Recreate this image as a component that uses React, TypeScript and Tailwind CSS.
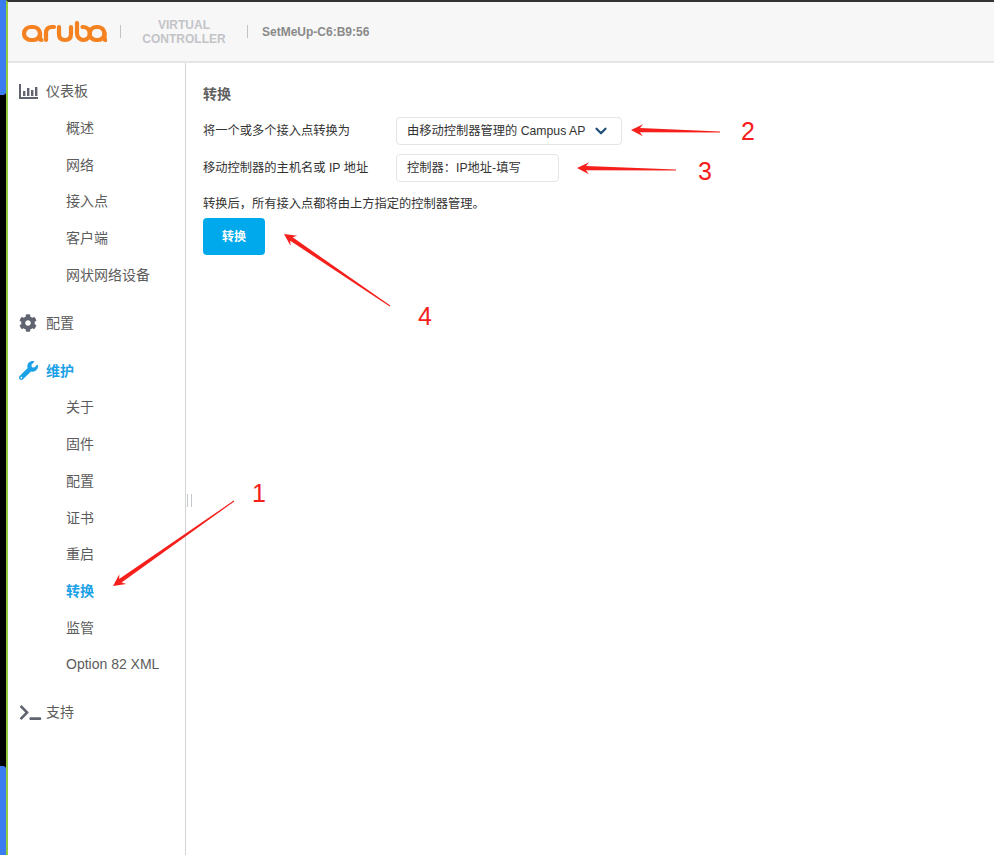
import { ChevronDown } from "lucide-react"
import { FaCog, FaTerminal, FaWrench } from "react-icons/fa"

const fontStack = "font-['Liberation_Sans','Noto_Sans_CJK_SC',sans-serif]"

const groups = [
  { label: "仪表板", icon: "chart", items: ["概述", "网络", "接入点", "客户端", "网状网络设备"] },
  { label: "配置", icon: "gear", items: [] },
  { label: "维护", icon: "wrench", active: true, items: ["关于", "固件", "配置", "证书", "重启", "转换", "监管", "Option 82 XML"] },
  { label: "支持", icon: "terminal", items: [] },
]

function ChartIcon() {
  return (
    <svg width="19" height="15" viewBox="0 0 19 15" fill="#5f6470">
      <path d="M0 0h2v13h17v2H0z" />
      <rect x="4" y="7" width="2.4" height="5" />
      <rect x="8" y="4" width="2.4" height="8" />
      <rect x="12" y="6" width="2.4" height="6" />
      <rect x="16" y="3" width="2.4" height="9" />
    </svg>
  )
}

function GroupIcon({ name }: { name: string }) {
  if (name === "chart") return <ChartIcon />
  if (name === "gear") return <FaCog className="size-[18px] text-[#5f6470]" />
  if (name === "wrench") return <FaWrench className="size-[19px] text-[#1ba1e6]" />
  return <FaTerminal className="w-[23px] h-[17px] text-[#5f6470]" />
}

function ArubaLogo() {
  return (
    <svg width="85" height="22" viewBox="0 0 85 22" fill="none" stroke="#f58220" strokeWidth="4.2" strokeLinecap="round">
      <rect x="2" y="6" width="16" height="13" rx="6.5" />
      <path d="M18 12v5.5q0 1.500 1.500 1.500" />
      <path d="M24 19v-7q0-6 6-6h2" />
      <path d="M37 6v7q0 6 6 6t6-6v-7" />
      <path d="M55 2v10.500a6.500 6.500 0 1 0 6.500-6.500h-1" />
      <rect x="67.500" y="6" width="15" height="13" rx="6.500" />
      <path d="M82.500 12v5.500q0 1.500 1 1.500" />
    </svg>
  )
}

function Arrow({ x1, y1, x2, y2 }: { x1: number; y1: number; x2: number; y2: number }) {
  const len = Math.hypot(x2 - x1, y2 - y1)
  const ux = (x2 - x1) / len
  const uy = (y2 - y1) / len
  const nx = -uy
  const ny = ux
  const at = (back: number, side: number) => `${x2 - ux * back + nx * side},${y2 - uy * back + ny * side}`
  const tail = (side: number) => `${x1 + nx * side},${y1 + ny * side}`
  const points = [
    tail(0.5),
    at(9, 2.1),
    at(12, 6),
    `${x2},${y2}`,
    at(12, -6),
    at(9, -2.1),
    tail(-0.5),
  ].join(" ")
  return <polygon points={points} fill="#f5201c" />
}

export default function App() {
  return (
    <div className={`relative flex h-[855px] w-[994px] overflow-hidden bg-white ${fontStack}`}>
      {/* desktop behind the window */}
      <div className="flex w-[6px] flex-col justify-between bg-black">
        <div className="h-[95px] rounded-br-[3px] bg-[#3b7cf0]" />
        <div className="h-[89px] rounded-tr-[3px] bg-[#3b7cf0]" />
      </div>

      <div className="flex flex-1 flex-col border-t-2 border-l-2 border-t-[#333333] border-l-[#96c93d]">
        {/* header */}
        <div className="flex h-[61px] items-center border-b-2 border-[#e5e5e5] bg-[#f7f7f7] pl-[14px]">
          <ArubaLogo />
          <div className="mr-[21px] ml-[13px] h-[13px] w-px bg-[#c4c4c4]" />
          <div className="w-[84px] text-center text-xs leading-[14px] font-bold text-[#c3c4c8]">
            VIRTUAL
            <br />
            CONTROLLER
          </div>
          <div className="mr-[14px] ml-[21px] h-[13px] w-px bg-[#c4c4c4]" />
          <div className="text-xs font-bold text-[#8a8a8a]">SetMeUp-C6:B9:56</div>
        </div>

        <div className="flex flex-1">
          {/* sidebar */}
          <div className="w-[178px] border-r border-[#d4d4d4] pt-[10px]">
            {groups.map((group) => (
              <div key={group.label} className="mb-[11.3px]">
                <div className={`flex h-[36.7px] items-center text-sm ${group.active ? "font-bold text-[#1ba1e6]" : "text-[#5c5c5c]"}`}>
                  <div className="ml-[10px] flex w-[28px] shrink-0 items-center justify-start pl-px">
                    <GroupIcon name={group.icon} />
                  </div>
                  {group.label}
                </div>
                {group.items.map((item) => (
                  <div
                    key={item}
                    className={`flex h-[36.7px] items-center pl-[58px] text-sm ${item === "转换" ? "font-bold text-[#1ba1e6]" : "text-[#5c5c5c]"}`}
                  >
                    {item}
                  </div>
                ))}
              </div>
            ))}
          </div>

          {/* content */}
          <div className="flex-1 pt-[21px] pl-[17px]">
            <h2 className="text-sm leading-5 font-bold text-[#5f5f5f]">转换</h2>
            <div className="mt-[13px] grid grid-cols-[193px_auto] content-start items-center gap-y-[9px] text-[12.25px] text-[#333333]">
              <div>将一个或多个接入点转换为</div>
              <div className="flex h-[28px] w-[226px] items-center justify-between rounded-[4px] border border-[#e4e4e4] pr-[11px] pl-[10px]">
                <span>由移动控制器管理的 Campus AP</span>
                <ChevronDown className="size-[18px] text-[#1f4e79]" strokeWidth={3} />
              </div>
              <div>移动控制器的主机名或 IP 地址</div>
              <div className="flex h-[28px] w-[163px] items-center rounded-[4px] border border-[#e4e4e4] pl-[10px]">控制器：IP地址-填写</div>
            </div>
            <p className="mt-[14px] text-[12.25px] leading-[16px] text-[#333333]">转换后，所有接入点都将由上方指定的控制器管理。</p>
            <button className="mt-[6px] h-[37px] w-[62px] rounded-[4px] bg-[#00a9ec] text-xs font-bold text-white">转换</button>
          </div>
        </div>
      </div>

      {/* sidebar resize handle */}
      <div className="absolute top-[494px] left-[187px] h-[13px] w-[5px] border-x border-[#c4c8d0]" />

      {/* annotations drawn on the screenshot */}
      <svg className="absolute inset-0" width="994" height="855">
        <Arrow x1={234} y1={501} x2={113} y2={586} />
        <Arrow x1={720} y1={132} x2={631} y2={130} />
        <Arrow x1={676} y1={170} x2={577} y2={168} />
        <Arrow x1={390} y1={306} x2={284} y2={234} />
      </svg>
      <span className="absolute top-[479px] left-[252px] text-[25px] leading-7 text-[#f5201c]">1</span>
      <span className="absolute top-[117px] left-[741px] text-[25px] leading-7 text-[#f5201c]">2</span>
      <span className="absolute top-[157px] left-[698px] text-[25px] leading-7 text-[#f5201c]">3</span>
      <span className="absolute top-[302px] left-[418px] text-[25px] leading-7 text-[#f5201c]">4</span>
    </div>
  )
}
